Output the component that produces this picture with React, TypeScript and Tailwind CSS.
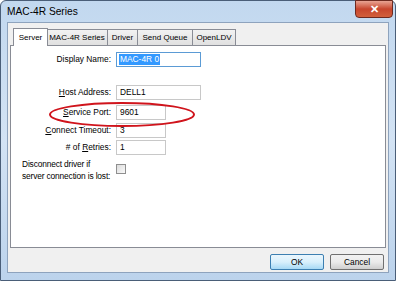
import React from 'react';

const font = { fontFamily: '"Liberation Sans", Arial, sans-serif' };

const tabs: [string, string][] = [
  ['Server', 'w-[35px]'],
  ['MAC-4R Series', 'w-[62px]'],
  ['Driver', 'w-[31px]'],
  ['Send Queue', 'w-[56px]'],
  ['OpenLDV', 'w-[44px]'],
];

const Field = ({ label, ul, value, w, sel }: { label: string; ul?: number; value: string; w: string; sel?: boolean }) => (
  <div className="flex items-center h-[15px]">
    <div className="w-[105px] pr-[5px] text-right text-[8.4px] text-black whitespace-nowrap">
      {ul === undefined ? (
        label
      ) : (
        <>
          {label.slice(0, ul)}
          <span className="underline">{label[ul]}</span>
          {label.slice(ul + 1)}
        </>
      )}
    </div>
    <div
      className={`${w} h-[15px] bg-white border flex items-center pl-[2px] text-[8.4px] whitespace-nowrap ${
        sel ? 'border-[#5b9bd5]' : 'border-[#c8c8c8]'
      }`}
    >
      {sel ? <span className="bg-[#3399ff] text-white leading-[11px] px-[1px]">{value}</span> : <span className="px-[1px]">{value}</span>}
    </div>
  </div>
);

export default function App() {
  return (
    <div className="w-[396px] h-[281px] overflow-hidden" style={font}>
      <div className="w-full h-full flex flex-col bg-gradient-to-b from-[#c2d8ef] via-[#d3e3f4] to-[#bcd3ec] border border-[#4a5e78] rounded-t-[6px]">
        {/* title bar */}
        <div className="relative h-[21px] flex items-center pl-[6px] text-[10.2px] text-black">
          <span>MAC-4R Series</span>
          <div className="absolute right-[2px] top-[-1px] w-[38px] h-[18px] rounded-b-[4px] border border-[#6d2a20] bg-gradient-to-b from-[#e8a393] via-[#c7452d] to-[#d2603c] flex items-center justify-center">
            <span className="text-white text-[11px] font-bold leading-none">✕</span>
          </div>
        </div>
        {/* client */}
        <div className="flex-1 mx-[6px] mb-[7px] bg-[#f0f0f0] border border-[#8ea3bd] flex flex-col px-[2px] pt-[4px]">
          <div className="flex items-end pl-[3px] h-[18px]">
            {tabs.map(([t, w], i) => (
              <div
                key={t}
                className={
                  i === 0
                    ? `${w} h-[18px] bg-white border border-[#898c95] border-b-0 text-[8px] flex items-center justify-center whitespace-nowrap relative z-10 -mb-px -mr-px`
                    : `${w} h-[16px] bg-gradient-to-b from-[#f2f2f2] to-[#e0e0e0] border border-[#898c95] border-b-0 text-[8px] flex items-center justify-center whitespace-nowrap -ml-px`
                }
              >
                {t}
              </div>
            ))}
          </div>
          <div className="relative h-[203px] bg-white border border-[#898c95] pt-[6px] flex flex-col">
            <Field label="Display Name:" value="MAC-4R 0" w="w-[85px]" sel />
            <div className="h-[18px]" />
            <Field label="Host Address:" ul={0} value="DELL1" w="w-[85px]" />
            <div className="h-[5px]" />
            <Field label="Service Port:" ul={0} value="9601" w="w-[50px]" />
            <div className="h-[3px]" />
            <Field label="Connect Timeout:" ul={0} value="3" w="w-[50px]" />
            <div className="h-[2px]" />
            <Field label="# of Retries:" ul={5} value="1" w="w-[50px]" />
            <div className="flex mt-[3px]">
              <div className="w-[105px] pl-[11px] text-[8.4px] tracking-[-0.15px] leading-[12px] text-black whitespace-nowrap">
                Disconnect driver if
                <br />
                server connection is lost:
              </div>
              <div className="mt-[6px] w-[10px] h-[10px] border border-[#8f8f8f] bg-gradient-to-br from-[#dcdcdc] to-[#fafafa]" />
            </div>
            <svg className="absolute left-[37px] top-[55px]" width="148" height="27" viewBox="0 0 148 27">
              <ellipse cx="74" cy="13.5" rx="72" ry="11.5" fill="none" stroke="#d0141c" strokeWidth="2" />
            </svg>
          </div>
          <div className="flex justify-end gap-[6px] pr-[2px] mt-[6px]">
            <div className="w-[54px] h-[16px] rounded-[2px] border border-[#3c7fb1] bg-gradient-to-b from-[#eaf6fd] via-[#d9f0fc] to-[#a7d9f5] flex items-center justify-center text-[8.4px]">
              OK
            </div>
            <div className="w-[54px] h-[16px] rounded-[2px] border border-[#707070] bg-gradient-to-b from-[#f2f2f2] via-[#ebebeb] to-[#cfcfcf] flex items-center justify-center text-[8.4px]">
              Cancel
            </div>
          </div>
        </div>
      </div>
    </div>
  );
}
